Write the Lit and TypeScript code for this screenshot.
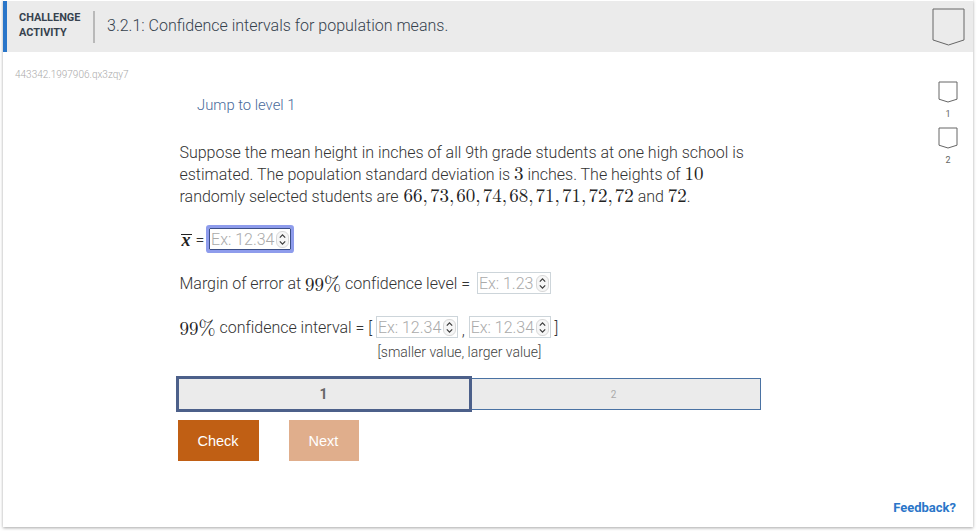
import { LitElement, html, css, svg } from "lit";
import { customElement } from "lit/decorators.js";

const shield = (w: number, h: number) => html`<svg class="shield" width=${w + 2} height=${h + 2} viewBox="0 0 ${w + 2} ${h + 2}">
  <path d="M1 1H${w + 1}V${h - h * 0.14 + 1}L${w / 2 + 1} ${h + 1}L1 ${h - h * 0.14 + 1}Z" fill="none" stroke="#666" stroke-width="1"></path>
</svg>`;

const spin = svg`<rect x=".5" y=".5" width="12" height="16" rx="5.5" fill="#f6f6f6" stroke="#cfcfcf" stroke-width=".8"></rect>
<path d="M3.8 6.6 6.5 3.9 9.2 6.6M3.8 10.4 6.5 13.1 9.2 10.4" fill="none" stroke="#3c3c3c" stroke-width="1.2"></path>`;

const pct = html`<span class="m">99<span class="pc">%</span></span>`;

@customElement("app-root")
export class AppRoot extends LitElement {
  static styles = css`
    :host { display: block; width: 977px; height: 531px; background: #fff; font-family: Roboto, "Liberation Sans", sans-serif; color: #3d3d3d; font-weight: 300; overflow: hidden; }
    .card { box-sizing: border-box; margin-left: 3px; width: 970px; height: 527px; background: #fff; box-shadow: 0 1px 3px rgba(0,0,0,.35); display: flex; flex-direction: column; }
    .head { height: 51px; margin-top: 1px; flex: none; background: #ebebeb; border-left: 4px solid #2a76c9; display: flex; align-items: center; box-sizing: border-box; padding-left: 12px; }
    .tag { font-size: 10.9px; line-height: 15px; font-weight: 700; color: #36424e; width: 74px; margin-bottom: 3px; }
    .sep { width: 2px; height: 32px; background: #b9b9b9; margin-right: 12px; }
    .title { font-size: 16px; font-weight: 300; color: #36424e; flex: 1; margin-bottom: 2px; }
    .head .shield { margin-right: 8px; }
    .main { flex: 1; display: grid; grid-template-columns: 1fr 50px; position: relative; min-height: 0; }
    .content { padding-left: 12px; display: flex; flex-direction: column; }
    .id { font-size: 10px; color: #aaa; margin-top: 17px; line-height: 12px; font-weight: 300; }
    .jump { margin-left: 182px; margin-top: 14px; font-size: 14.8px; line-height: 20px; color: #4a6a9a; font-weight: 300; }
    .body { margin-left: 164.5px; width: 584px; margin-top: 27px; letter-spacing: -.015px; }
    p { margin: 0; font-size: 16px; line-height: 22px; color: #333; }
    .m { font-family: "Latin Modern Roman", "Liberation Serif", serif; font-weight: 400; font-size: 19px; line-height: 1px; color: #222; letter-spacing: 0; }
    .list { word-spacing: -4.2px; margin-left: 1px; }
    .pc { font-size: 20.5px; }
    .row { display: flex; align-items: center; font-size: 16px; color: #333; height: 24px; white-space: pre; }
    .r1 { margin-top: 19px; }
    .r2 { margin-top: 20px; }
    .xbar { font-family: "Liberation Serif", serif; font-style: italic; font-weight: 700; font-size: 18px; color: #222; line-height: 10px; border-top: 1px solid #222; padding: 0 1px; margin-left: 1px; }
    .input { display: inline-flex; align-items: center; box-sizing: border-box; height: 22px; border: 1px solid #cdd5da; font-size: 16px; color: #aaa; padding-left: 1px; }
    .input svg { margin: 0 1px 0 1px; }
    .ph { flex: 1; white-space: nowrap; }
    .w1 { width: 74px; }
    .w2 { width: 82px; }
    .focus { border-color: #3c4f87; border-radius: 1px; box-shadow: 0 0 0 3px #8e9cec; margin-left: 1px; }
    .gap { margin-right: 3px; }
    .comma { margin-top: 7px; }
    .note { font-size: 14px; line-height: 16px; color: #3f3f3f; margin-left: 198px; margin-top: 5px; }
    .levels { display: flex; margin-left: -4px; margin-top: 16px; height: 36px; align-items: center; width: 585px; }
    .lv { box-sizing: border-box; background: #ebebeb; display: flex; align-items: center; justify-content: center; }
    .lv1 { width: 296px; height: 36px; border: 3px solid #4c608a; font-size: 14px; font-weight: 700; color: #666; z-index: 1; }
    .lv2 { flex: 1; height: 32px; border: 1px solid #4a72a3; border-left: none; font-size: 10px; color: #aaa; font-weight: 400; padding-right: 4px; }
    .btns { display: flex; margin-left: -2px; margin-top: 8px; gap: 30px; }
    .btn { display: flex; align-items: center; justify-content: center; height: 41px; color: #fff; font-family: "Liberation Sans", sans-serif; font-size: 14.5px; font-weight: 400; }
    .check { width: 81px; background: #c05f14; }
    .next { width: 70px; background: #e0ae8c; }
    .rail { display: flex; flex-direction: column; align-items: center; padding-top: 29px; }
    .rail .n { font-size: 9px; line-height: 12px; color: #666; margin: 5px 0 7px; font-weight: 400; }
    .fb { position: absolute; right: 17px; bottom: 12px; font-size: 13px; font-weight: 700; color: #2a76c9; }
  `;

  input(w: string, text: string, focus = false) {
    return html`<span class="input ${w} ${focus ? "focus" : ""}"><span class="ph">${text}</span><svg width="13" height="17" viewBox="0 0 13 17">${spin}</svg></span>`;
  }

  render() {
    return html`<div class="card">
      <div class="head">
        <div class="tag">CHALLENGE<br />ACTIVITY</div>
        <div class="sep"></div>
        <div class="title">3.2.1: Confidence intervals for population means.</div>
        ${shield(31, 36)}
      </div>
      <div class="main">
        <div class="content">
          <div class="id">443342.1997906.qx3zqy7</div>
          <div class="jump">Jump to level 1</div>
          <div class="body">
            <p>Suppose the mean height in inches of all 9th grade students at one high school is<br />
            estimated. The population standard deviation is <span class="m">3</span> inches. The heights of <span class="m">10</span><br />
            randomly selected students are <span class="m list">66, 73, 60, 74, 68, 71, 71, 72, 72</span> and <span class="m">72</span>.</p>
            <div class="row r1"><span class="xbar">x</span><span> = </span>${this.input("w2", "Ex: 12.34", true)}</div>
            <div class="row r2"><span>Margin of error at </span>${pct}<span class="gap"> confidence level = </span>${this.input("w1", "Ex: 1.23")}</div>
            <div class="row r2">${pct}<span> confidence interval = [ </span>${this.input("w2", "Ex: 12.34")}<span class="comma"> , </span>${this.input("w2", "Ex: 12.34")}<span> ]</span></div>
            <div class="note">[smaller value, larger value]</div>
            <div class="levels"><div class="lv lv1">1</div><div class="lv lv2">2</div></div>
            <div class="btns"><div class="btn check">Check</div><div class="btn next">Next</div></div>
          </div>
        </div>
        <div class="rail">
          ${shield(18, 20)}<div class="n">1</div>
          ${shield(18, 20)}<div class="n">2</div>
        </div>
        <div class="fb">Feedback?</div>
      </div>
    </div>`;
  }
}
